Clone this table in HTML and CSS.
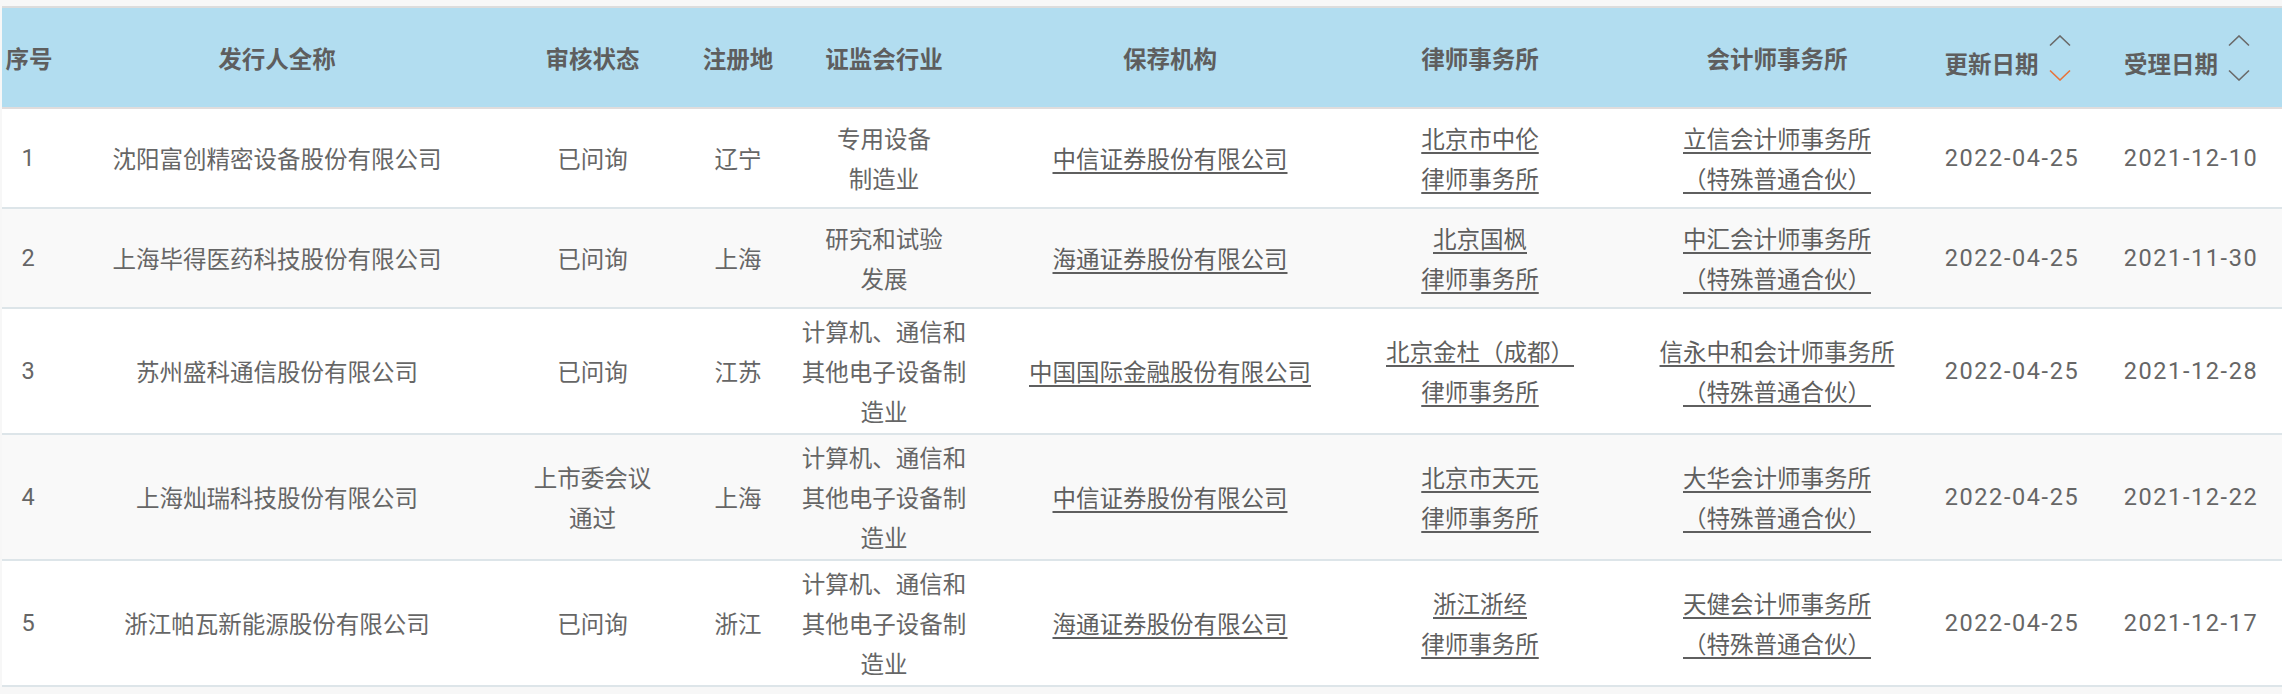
FILE: index.html
```html
<!DOCTYPE html>
<html lang="zh-CN">
<head>
<meta charset="utf-8">
<title>IPO 审核列表</title>
<link rel="stylesheet" href="styles.css">
</head>
<body>
<div class="table">
  <div class="row head">
    <div class="cell c1">序号</div>
    <div class="cell c2">发行人全称</div>
    <div class="cell c3">审核状态</div>
    <div class="cell c4">注册地</div>
    <div class="cell c5">证监会行业</div>
    <div class="cell c6">保荐机构</div>
    <div class="cell c7">律师事务所</div>
    <div class="cell c8">会计师事务所</div>
    <div class="cell c9 h9">
      <span class="sort-label">更新日期</span>
      <svg class="sort" width="22" height="46" viewBox="0 0 22 46"><polyline points="1,10.5 11,1 21,10.5" class="chev"/><polyline points="1,35.5 11,45 21,35.5" class="chev active"/></svg>
    </div>
    <div class="cell c10 h10">
      <span class="sort-label">受理日期</span>
      <svg class="sort" width="22" height="46" viewBox="0 0 22 46"><polyline points="1,10.5 11,1 21,10.5" class="chev"/><polyline points="1,35.5 11,45 21,35.5" class="chev"/></svg>
    </div>
  </div>

  <div class="row">
    <div class="cell c1 num">1</div>
    <div class="cell c2">沈阳富创精密设备股份有限公司</div>
    <div class="cell c3">已问询</div>
    <div class="cell c4">辽宁</div>
    <div class="cell c5">专用设备<br>制造业</div>
    <div class="cell c6"><a class="link">中信证券股份有限公司</a></div>
    <div class="cell c7"><a class="link">北京市中伦<br>律师事务所</a></div>
    <div class="cell c8"><a class="link">立信会计师事务所<br>（特殊普通合伙）</a></div>
    <div class="cell c9 num">2022-04-25</div>
    <div class="cell c10 num">2021-12-10</div>
  </div>

  <div class="row alt">
    <div class="cell c1 num">2</div>
    <div class="cell c2">上海毕得医药科技股份有限公司</div>
    <div class="cell c3">已问询</div>
    <div class="cell c4">上海</div>
    <div class="cell c5">研究和试验<br>发展</div>
    <div class="cell c6"><a class="link">海通证券股份有限公司</a></div>
    <div class="cell c7"><a class="link">北京国枫<br>律师事务所</a></div>
    <div class="cell c8"><a class="link">中汇会计师事务所<br>（特殊普通合伙）</a></div>
    <div class="cell c9 num">2022-04-25</div>
    <div class="cell c10 num">2021-11-30</div>
  </div>

  <div class="row">
    <div class="cell c1 num">3</div>
    <div class="cell c2">苏州盛科通信股份有限公司</div>
    <div class="cell c3">已问询</div>
    <div class="cell c4">江苏</div>
    <div class="cell c5">计算机、通信和<br>其他电子设备制<br>造业</div>
    <div class="cell c6"><a class="link">中国国际金融股份有限公司</a></div>
    <div class="cell c7"><a class="link">北京金杜（成都）<br>律师事务所</a></div>
    <div class="cell c8"><a class="link">信永中和会计师事务所<br>（特殊普通合伙）</a></div>
    <div class="cell c9 num">2022-04-25</div>
    <div class="cell c10 num">2021-12-28</div>
  </div>

  <div class="row alt">
    <div class="cell c1 num">4</div>
    <div class="cell c2">上海灿瑞科技股份有限公司</div>
    <div class="cell c3">上市委会议<br>通过</div>
    <div class="cell c4">上海</div>
    <div class="cell c5">计算机、通信和<br>其他电子设备制<br>造业</div>
    <div class="cell c6"><a class="link">中信证券股份有限公司</a></div>
    <div class="cell c7"><a class="link">北京市天元<br>律师事务所</a></div>
    <div class="cell c8"><a class="link">大华会计师事务所<br>（特殊普通合伙）</a></div>
    <div class="cell c9 num">2022-04-25</div>
    <div class="cell c10 num">2021-12-22</div>
  </div>

  <div class="row">
    <div class="cell c1 num">5</div>
    <div class="cell c2">浙江帕瓦新能源股份有限公司</div>
    <div class="cell c3">已问询</div>
    <div class="cell c4">浙江</div>
    <div class="cell c5">计算机、通信和<br>其他电子设备制<br>造业</div>
    <div class="cell c6"><a class="link">海通证券股份有限公司</a></div>
    <div class="cell c7"><a class="link">浙江浙经<br>律师事务所</a></div>
    <div class="cell c8"><a class="link">天健会计师事务所<br>（特殊普通合伙）</a></div>
    <div class="cell c9 num">2022-04-25</div>
    <div class="cell c10 num">2021-12-17</div>
  </div>
</div>
</body>
</html>
```

FILE: styles.css
```css
html, body {
  margin: 0;
  padding: 0;
  background: #f7f7f7;
}

body {
  font-family: "Noto Sans CJK SC", "Noto Sans", sans-serif;
  font-size: 23.5px;
  color: #666666;
}

.table {
  width: 2280px;
  margin: 6px 0 0 2px;
  border-top: 2px solid #dcdcdc;
}

.row {
  display: grid;
  grid-template-columns: 58px 420px 200px 110px 200px 350px 270px 320px 170px 182px;
  min-height: 98px;
  background: #ffffff;
  border-bottom: 2px solid #dde5e9;
}

.row.alt {
  background: #f9f9f9;
}

.row.head {
  min-height: 99px;
  background: #b2ddf0;
  border-bottom: 2px solid #e0dcdc;
  font-weight: 700;
  color: #5e5e5e;
}

.cell {
  display: flex;
  align-items: center;
  justify-content: center;
  text-align: center;
  white-space: nowrap;
  line-height: 40px;
  padding: 2px 0;
  box-sizing: border-box;
}

.c1 { padding-right: 4px; }
.c2 { padding-left: 14px; }
.c3 { padding-left: 25px; }
.c4 { padding-left: 6px; }
.c5 { padding-right: 12px; }
.c6 { padding-left: 10px; }
.c7 { padding-left: 10px; }
.c8 { padding-left: 14px; }
.c9 { padding-right: 6px; }
.c10 { padding-right: 0; }

.head .h9 { padding-right: 15px; }
.head .h10 { padding-right: 8px; }

.num {
  font-family: Roboto, "Liberation Sans", sans-serif;
  letter-spacing: 1.6px;
}

.link {
  color: #5f5f5f;
  text-decoration: underline;
  text-decoration-thickness: 1.5px;
  text-underline-offset: 4px;
}

.sort-label {
  margin-top: 11px;
}

.sort {
  margin-left: 10px;
  display: block;
}

.chev {
  fill: none;
  stroke: #6a6a6a;
  stroke-width: 1.6;
}

.chev.active {
  stroke: #e8743b;
}
```
